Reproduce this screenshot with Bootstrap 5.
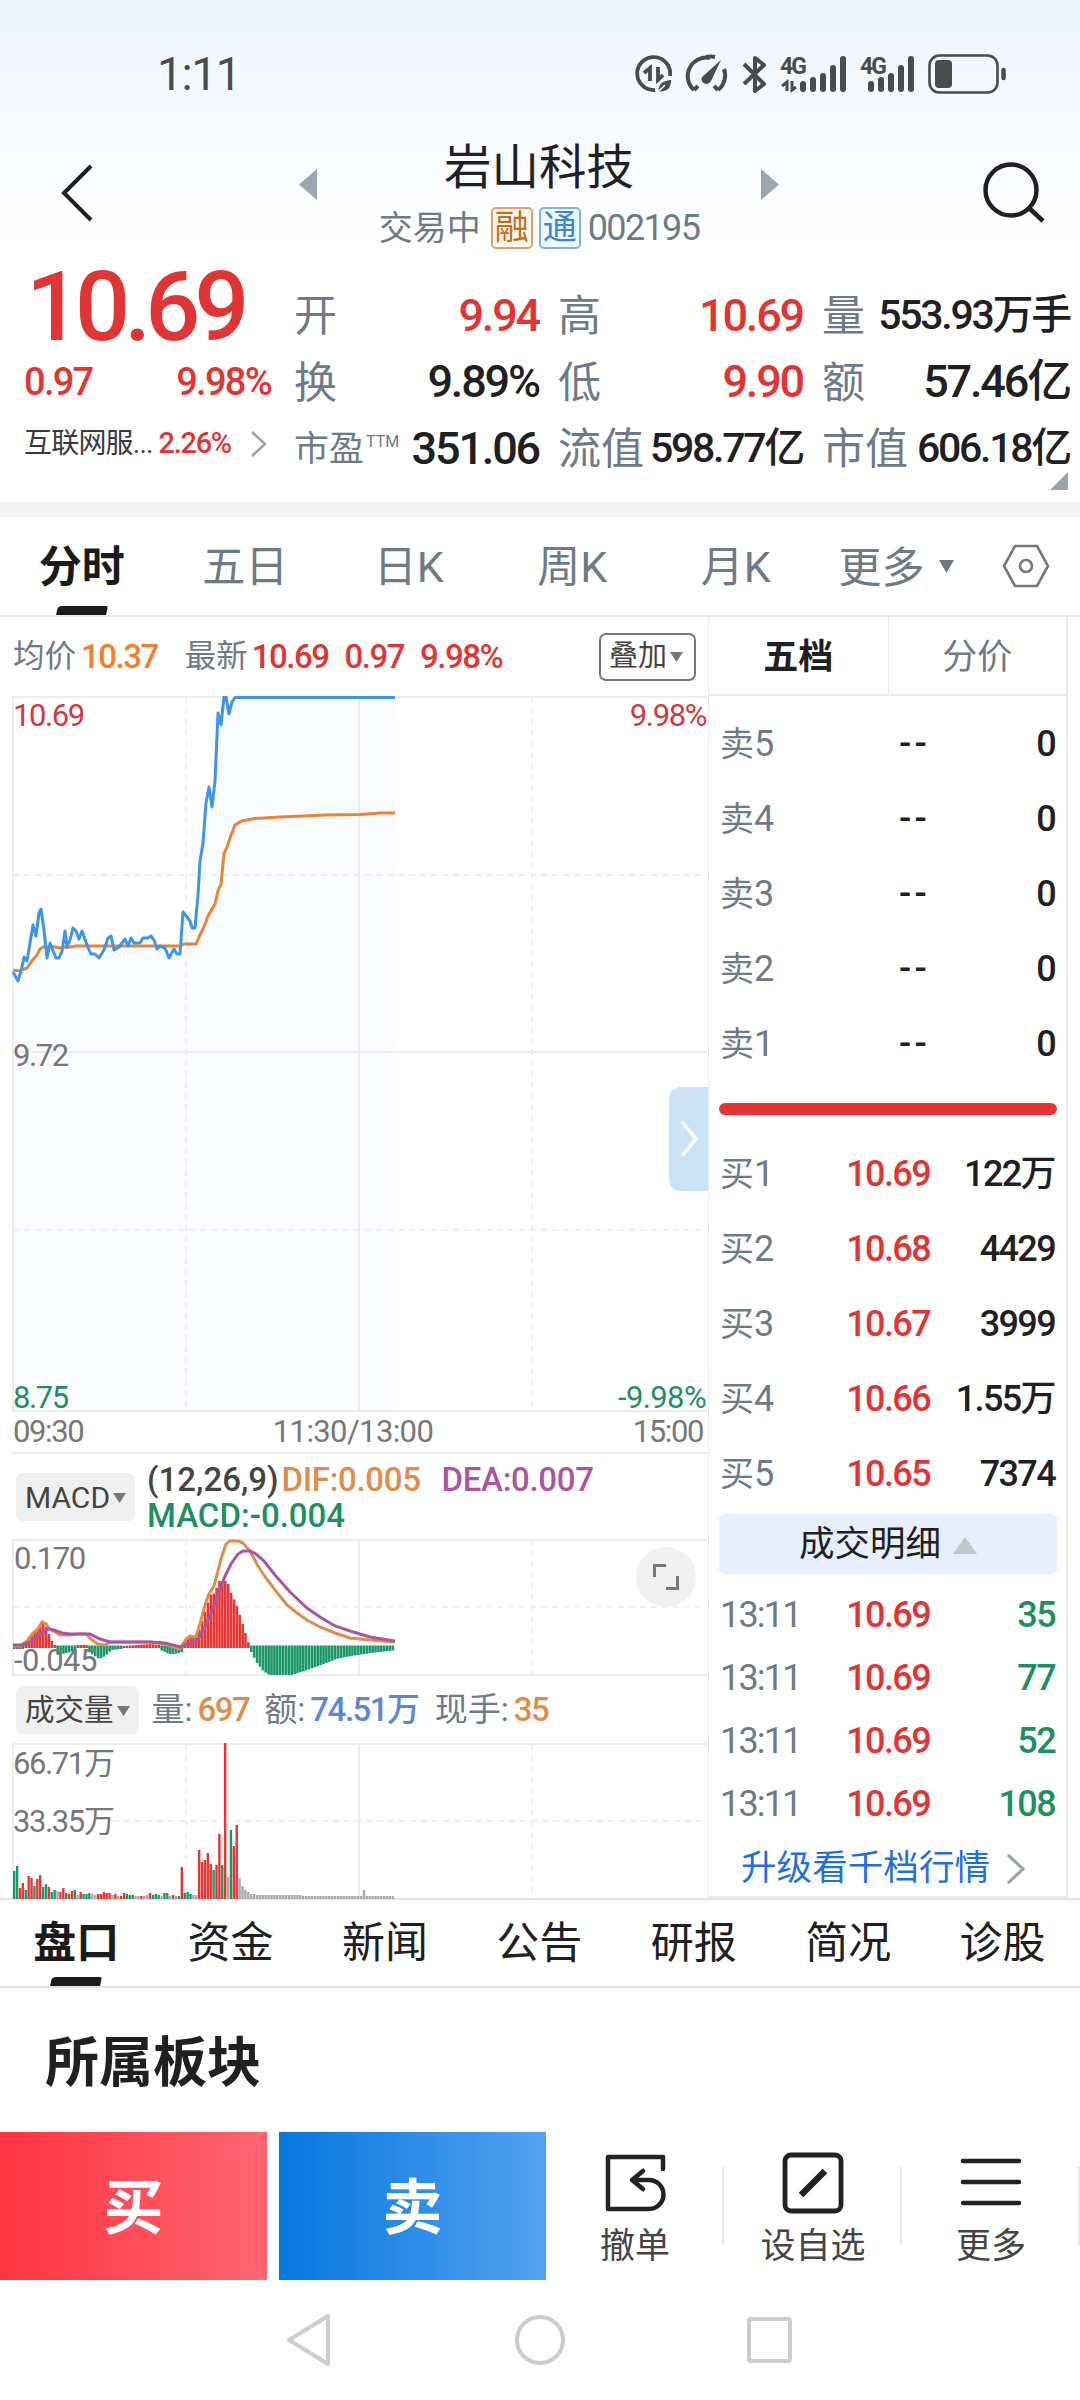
<!DOCTYPE html>
<html lang="zh-CN">
<head>
<meta charset="utf-8">
<meta name="viewport" content="width=device-width, initial-scale=1">
<title>岩山科技 002195</title>
<link href="https://cdn.jsdelivr.net/npm/bootstrap@5.3.0/dist/css/bootstrap.min.css" rel="stylesheet">
<style>
  :root { --up:#e03535; --down:#1f8f60; --ink:#1f2022; --mute:#6e7a86; --rule:#ebebeb; }
  body { width:1080px; height:2400px; overflow:hidden; background:#fff; color:var(--ink);
         font-family:Roboto,"Noto Sans CJK SC",sans-serif; line-height:1; }
  svg { display:block; flex:none; }
  .up { color:var(--up); } .down { color:var(--down); } .mute { color:var(--mute); }
  .num { letter-spacing:-.045em; font-weight:500; white-space:nowrap; }
  .thin { font-weight:400; }
  .top-zone { height:260px; background:linear-gradient(#eff4fe,#f8fafe 52%,#fff 96%); }
  .status { height:140px; padding:7px 72px 0 157px; }
  .clock { font-size:46px; color:#4a4b4d; letter-spacing:-.03em; }
  .title-row { height:120px; padding:0 34px 0 60px; }
  .stock-name { font-size:47.5px; line-height:50px; padding-top:3px; }
  .sub { font-size:34px; gap:7px; margin-top:14px; height:42px; }
  .tagbox { width:42px; height:42px; border:2px solid; border-radius:5px; font-size:34px; line-height:37px; text-align:center; }
  .tag-r { color:#c26d1c; border-color:#dca36d; background:#fff7ee; margin-left:3px; }
  .tag-t { color:#3b86c8; border-color:#7fb4dd; background:#eff7fd; margin-left:-1px; }
  .side-arrow { margin:29px 0 0 2px; }
  .quote { height:242px; padding:0 9px 0 24px; }
  .q-left { width:271px; padding-right:24px; }
  .price { font-size:97px; height:94px; line-height:94px; letter-spacing:-.062em; margin-left:2px; }
  .delta { font-size:38px; height:56px; }
  .sector { font-size:28px; height:67px; color:#3a3a3a; }
  .q-grid { width:776px; padding-top:22px; display:grid; grid-template-columns:245px 245px 248px; column-gap:19px; grid-auto-rows:66.5px; }
  .q-grid > div { display:flex; justify-content:space-between; align-items:center; white-space:nowrap; }
  .q-grid .lab { font-size:43px; color:var(--mute); padding-top:3px; margin-left:-1px; }
  .q-grid .num { font-size:45px; margin-right:1px; letter-spacing:-.048em; }
  .q-grid .num.mid { font-size:41px; letter-spacing:-.055em; }
  .ttm { font-size:16px; top:-14px; position:relative; margin-left:2px; }
  .corner { position:absolute; right:12px; bottom:12px; }
  .strip { height:15px; background:#f4f4f4; }
  .period { height:100px; border-bottom:2px solid var(--rule); font-size:43px; color:var(--mute); }
  .period .item { width:163.5px; padding-top:3px; }
  .item { text-align:center; position:relative; height:100%; display:flex; align-items:center; justify-content:center; }
  .on { font-weight:700; color:#1b1b1b; }
  .on::after { content:""; position:absolute; bottom:0; left:50%; width:50px; height:9px; margin-left:-25px; background:#1b1b1b; transform:skewX(-12deg); border-radius:4px 2px 0 0; }
  .main-zone { height:1281px; padding-left:12px; }
  .left-pane { width:696px; }
  .info { height:79px; font-size:31.5px; padding-left:1px; }
  .info .num { font-size:33px; }
  .overlay-btn { width:97px; height:48px; border:2px solid #777; border-radius:7px; font-size:29px; color:#444; background:#fff; margin-right:12px; padding:0 0 0 8px; gap:3px; }
  .soft-btn { background:#f0f0f0; border:0; border-radius:7px; height:48px; color:#444; font-size:30px; gap:3px; margin-left:4px; padding:2px 9px 0 9px; }
  .macd-head { height:87px; }
  .macd-text { font-size:33px; line-height:36px; font-weight:500; margin-left:12px; padding-top:2px; white-space:nowrap; }
  .vol-head { height:67px; font-size:33px; }
  .chart { position:relative; }
  .chart text { font-family:Roboto,"Noto Sans CJK SC",sans-serif; font-size:31px; letter-spacing:-.045em; fill:#777; }
  .handle { position:absolute; right:0; top:391px; width:39px; height:104px; background:#cce2f7; border-radius:12px 0 0 12px; }
  .expand { position:absolute; left:624px; top:8px; width:60px; height:60px; border-radius:50%; background:#f1f1f1; }
  .right-pane { width:360px; border:solid var(--rule); border-width:0 2px 2px 1px; }
  .book-tabs { height:79px; border-bottom:2px solid var(--rule); font-size:35px; padding-top:0; }
  .book-tabs > div { padding-top:4px; }
  .book-tabs > div + div { border-left:1px solid var(--rule); }
  .book-row { display:grid; grid-template-columns:80px 1fr 125px; align-items:center; padding:2px 11px 0 11px; height:75px; font-size:36px; }
  .book-row > :nth-child(n+2) { text-align:right; }
  .book-row .lab { color:var(--mute); white-space:nowrap; letter-spacing:-.035em; }
  .book-row .cn { font-size:34px; letter-spacing:0; }
  .book-row .num.dash { letter-spacing:.09em; padding-right:0; }
  .balance { height:12px; border-radius:6px; background:#e33434; margin:23px 9px 20px 10px; }
  .detail { height:60px; margin:4px 9px 8px 10px; border-radius:6px; background:#e6effb; font-size:35.5px; gap:12px; padding-top:2px; }
  .trade { height:63px; grid-template-columns:90px 1fr 125px; }
  .trade .lab { letter-spacing:-.05em; }
  .more-link { height:66px; font-size:35.6px; color:#1f6fdc; gap:16px; padding:4px 0 0 32px; }
  .info-tabs { height:90px; border:solid #e4e4e4; border-width:2px 0; font-size:43px; }
  .info-tabs .item { width:154.4px; }
  .block-title { height:144px; font-size:54px; font-weight:700; padding:8px 0 0 45px; margin:0; line-height:1; }
  .actions { height:148px; }
  .trade-btn { width:267px; height:148px; border-radius:0; border:0; color:#fff; font-size:60px; font-weight:700; padding:5px 0 0; }
  .buy { background:linear-gradient(90deg,#ff3442,#ff6671); }
  .sell { background:linear-gradient(90deg,#0676df,#53a2f0); margin-left:12px; }
  .act { width:178px; font-size:35px; color:#444; gap:15px; padding-top:3px; position:relative; }
  .act::after { content:""; position:absolute; right:0; top:35px; width:2px; height:78px; background:#e8e8e8; }
  .sysnav { height:120px; padding:0 288px 0 286px; }
</style>
<script src="https://cdn.jsdelivr.net/npm/bootstrap@5.3.0/dist/js/bootstrap.bundle.min.js"></script>
</head>
<body>
<header class="top-zone">
  <div class="status d-flex justify-content-between align-items-center">
    <div class="num thin clock">1:11</div>
    <svg width="376" height="50" viewBox="632 48 376 50" fill="none" stroke="#4a4b4d" stroke-width="4">
      <path d="M655 89a16.500 16.500 0 1 1 15-14M650 80V67l-6 5M658 66v13l5-5" stroke-width="3.800"/>
      <path d="M658 91c-1-10 6-12 14-13c0 9-4 14-14 13zM657 92l8-8" fill="#4a4b4d" stroke="#f4f7fe" stroke-width="1.500"/>
      <path d="M694 89a18.500 18.500 0 0 1 16-32M724 68a18.500 18.500 0 0 1-6 21M715 56a18.500 18.500 0 0 0-9 0M694 89l4-4M718 89l-4-4"/>
      <path d="M721 59L702 76a4.600 4.600 0 1 0 9 4z" fill="#4a4b4d" stroke="none"/>
      <path d="M744 63l20 20-9 7V57l9 7-20 19" stroke-linejoin="round"/>
      <g fill="#4a4b4d" stroke="none" font-family="Roboto" font-weight="700" font-size="23" letter-spacing="-2"><text x="780" y="73">4G</text><text x="860" y="73">4G</text></g>
      <path d="M787 90V81l-5 4M792 80v9l4-3" stroke-width="3"/>
      <g stroke-width="6" stroke-linecap="round"><path d="M803 83v5M813 79v9M823 75v13M833 67v21M843 58v30M871 83v5M881 79v9M891 75v13M901 67v21M911 58v30"/></g>
      <rect x="929.500" y="54.500" width="68" height="37" rx="10" stroke-width="2.600"/>
      <rect x="935" y="59" width="17" height="28" rx="4" fill="#4a4b4d" stroke="none"/>
      <path d="M1003.500 69v8" stroke-width="4.500" stroke-linecap="round"/>
    </svg>
  </div>
  <div class="title-row d-flex justify-content-between align-items-start">
    <svg class="mt-4" width="34" height="58" viewBox="0 0 34 58" fill="none" stroke="#1f2022" stroke-width="4"><path d="M31 2L4 29l27 27"/></svg>
    <div class="d-flex align-items-start">
      <svg class="side-arrow" width="18" height="31" viewBox="0 0 18 31"><path d="M18 0v31L0 15.500z" fill="#9ba6b0"/></svg>
      <div class="text-center" style="width:444px">
        <div class="stock-name">岩山科技</div>
        <div class="sub mute d-flex justify-content-center align-items-center"><span>交易中</span><span class="tagbox tag-r">融</span><span class="tagbox tag-t">通</span><span class="num thin" style="font-size:36px">002195</span></div>
      </div>
      <svg class="side-arrow ms-0" width="18" height="31" viewBox="0 0 18 31"><path d="M0 0v31l18-15.500z" fill="#9ba6b0"/></svg>
    </div>
    <svg style="margin-top:21px" width="64" height="62" viewBox="982 161 64 62" fill="none" stroke="#1f2022" stroke-width="4.500"><circle cx="1011" cy="190" r="25.500"/><path d="M1029 208l14 13"/></svg>
  </div>
</header>

<section class="quote d-flex position-relative">
  <div class="q-left">
    <div class="num price up">10.69</div>
    <div class="num delta up d-flex justify-content-between align-items-center"><span>0.97</span><span>9.98%</span></div>
    <div class="sector d-flex align-items-center"><span style="letter-spacing:-.8px">互联网服...</span><span class="num up" style="font-size:29px;margin-left:6px">2.26%</span>
      <svg class="ms-auto me-1" width="17" height="26" viewBox="0 0 17 26" fill="none" stroke="#999fa6" stroke-width="2.500"><path d="M2 1l13 12L2 25"/></svg></div>
  </div>
  <div class="q-grid">
    <div><span class="lab">开</span><span class="num up">9.94</span></div>
    <div><span class="lab">高</span><span class="num up">10.69</span></div>
    <div><span class="lab">量</span><span class="num mid">553.93万手</span></div>
    <div><span class="lab">换</span><span class="num">9.89%</span></div>
    <div><span class="lab">低</span><span class="num up">9.90</span></div>
    <div><span class="lab">额</span><span class="num">57.46亿</span></div>
    <div><span class="lab" style="font-size:35px">市盈<span class="ttm">TTM</span></span><span class="num">351.06</span></div>
    <div><span class="lab">流值</span><span class="num mid">598.77亿</span></div>
    <div><span class="lab">市值</span><span class="num mid">606.18亿</span></div>
  </div>
  <svg class="corner" width="18" height="18" viewBox="0 0 18 18"><path d="M18 0v18H0z" fill="#9aa2ad"/></svg>
</section>
<div class="strip"></div>

<nav class="period d-flex align-items-center">
  <div class="item on">分时</div><div class="item">五日</div><div class="item">日K</div><div class="item">周K</div><div class="item">月K</div>
  <div class="d-flex align-items-center" style="margin-left:21px;gap:14px"><span class="pt-1">更多</span><svg width="15" height="13" viewBox="0 0 15 13"><path d="M0 0h15L7.500 13z" fill="#6e7a86"/></svg></div>
  <svg class="ms-auto" style="margin-right:30px" width="48" height="44" viewBox="0 0 48 44" fill="none" stroke="#777" stroke-width="2.600"><path d="M13 2h22l11 20-11 20H13L2 22z"/><circle cx="24" cy="22" r="6"/></svg>
</nav>

<main class="main-zone d-flex">
  <div class="left-pane">
    <div class="info d-flex align-items-center">
      <span class="mute">均价</span><span class="num" style="color:#f0812b;margin-left:5px">10.37</span>
      <span class="mute" style="margin-left:27px">最新</span><span class="num up ms-1">10.69</span><span class="num up" style="margin-left:16px">0.97</span><span class="num up" style="margin-left:16px">9.98%</span>
      <button class="overlay-btn d-flex align-items-center ms-auto" type="button">叠加<svg width="13" height="10" viewBox="0 0 13 10"><path d="M0 0h13L6.500 10z" fill="#777"/></svg></button>
    </div>
    <div class="chart">
      <svg width="696" height="756" viewBox="12 696 696 756" fill="none">
        <path d="M13 972L18 981L22 967L24 957L27 961L33 925L36 936L39 913L41 909L44 930L47 958L50 943L56 958L59 958L65 931L67 947L73 928L79 939L82 931L91 954L95 954L99 958L111 936L114 950L125 939L128 946L131 938L134 943L151 936L157 949L165 948L169 958L180 954L183 912L192 928L195 928L200 861L206 803L212 807L218 713L224 697H395V1411H13z" fill="#f9fbff"/>
        <g stroke="#ededed" stroke-width="2"><path d="M13 1411V697H707M13 1052H707M359 697V1411M13 1411H707"/><path d="M186 697V1411M532 697V1411M13 875H707M13 1230H707" stroke-dasharray="6 5" stroke-width="1.500"/></g>
        <polyline points="13,970 20,971 27,968 32,961 37,955 40,949 43,947 55,947 60,948 70,947 76,946 180,946 184,944 196,944 200,935 204,927 208,916 215,904 218,891 221,884 224,854 227,847 230,838 233,830 235,825 242,821 255,818.500 280,817 305,816 325,815 360,814.500 380,813 395,813" stroke="#e8833a" stroke-width="3"/>
        <polyline points="13,972 18,981 22,967 24,957 27,961 30,943 33,925 36,936 39,913 41,909 44,930 47,958 50,943 56,958 59,958 62,951 65,931 67,947 70,940 73,928 76,931 79,939 82,931 87,945 91,954 95,954 99,958 104,950 108,938 111,936 114,950 119,947 125,939 128,946 131,938 134,943 140,943 143,938 148,938 151,936 154,940 157,949 160,946 165,948 169,958 174,949 177,954 180,954 183,912 187,917 190,921 192,928 195,928 198,895 200,861 203,843 206,803 209,787 212,807 215,781 218,713 221,725 224,697 226,697 229,714 232,702 235,697.500 395,697.500" stroke="#3e95e6" stroke-width="3" stroke-linejoin="round"/>
        <text x="13" y="726" style="fill:#cf3a42">10.69</text><text x="706" y="726" text-anchor="end" style="fill:#cf3a42">9.98%</text>
        <text x="13" y="1066">9.72</text>
        <text x="13" y="1408" style="fill:#1f8f60">8.75</text><text x="706" y="1408" text-anchor="end" style="fill:#1f8f60;letter-spacing:-.02em">-9.98%</text>
        <text x="13" y="1442">09:30</text><text x="353" y="1442" text-anchor="middle" style="letter-spacing:-.02em">11:30/13:00</text><text x="703" y="1442" text-anchor="end">15:00</text>
      </svg>
      <div class="handle d-flex align-items-center justify-content-center"><svg width="20" height="40" viewBox="0 0 20 40" fill="none" stroke="#fff" stroke-width="3.500"><path d="M3 3l14 17L3 37"/></svg></div>
    </div>
    <div class="macd-head d-flex align-items-center" style="border-top:2px solid #ededed">
      <button class="soft-btn d-flex align-items-center" type="button"><span>MACD</span><svg width="13" height="10" viewBox="0 0 13 10"><path d="M0 0h13L6.500 10z" fill="#777"/></svg></button>
      <div class="macd-text"><span style="color:#444">(12,26,9)</span><span style="color:#dd8d4d;margin-left:3px;letter-spacing:-.01em">DIF:0.005</span><span style="color:#ab559f;margin-left:21px;letter-spacing:-.01em">DEA:0.007</span><br><span class="down">MACD:-0.004</span></div>
    </div>
    <div class="chart">
      <svg width="696" height="137" viewBox="12 1540 696 137" fill="none">
        <g stroke="#ededed" stroke-width="2"><path d="M13 1677V1541H707M359 1540V1676M13 1676H707"/><path d="M186 1540V1676M532 1540V1676M13 1608H707" stroke-dasharray="6 5" stroke-width="1.500"/></g>
        <g id="macdBars"></g>
        <text x="14" y="1570">0.170</text><text x="14" y="1672" style="letter-spacing:-.02em">-0.045</text>
        <polyline points="13,1647 20,1647 27,1642 33,1634 38,1630 42,1623 46,1625 50,1630 60,1636 70,1636 78,1635 86,1635 92,1641 98,1645 105,1646 110,1643 150,1643 165,1645 180,1650 186,1640 190,1637 196,1638 200,1625 205,1606 209,1595 214,1587 218,1572 221,1560 226,1545 230,1542 238,1542 243,1544 250,1552 258,1567 266,1579 275,1591 287,1606 297,1614 307,1621 320,1628 335,1634 350,1639 370,1641 395,1643" stroke="#dd8d4d" stroke-width="3"/>
        <polyline points="13,1646 22,1646 33,1642 40,1635 48,1630 54,1631 62,1634 70,1635 90,1635 100,1640 110,1643 150,1643 165,1644 180,1648 190,1644 198,1640 204,1630 212,1612 220,1590 225,1577 231,1565 238,1555 243,1552 250,1552 256,1555 264,1562 275,1576 290,1593 307,1609 320,1618 335,1627 350,1632 370,1638 395,1642" stroke="#ab559f" stroke-width="3"/>
      </svg>
      <div class="expand d-flex align-items-center justify-content-center"><svg width="28" height="28" viewBox="0 0 28 28" fill="none" stroke="#777" stroke-width="3"><path d="M2.500 14V2.500H14M14 25.500h11.500V13"/></svg></div>
    </div>
    <div class="vol-head d-flex align-items-center">
      <button class="soft-btn d-flex align-items-center" type="button" style="font-size:29.500px">成交量<svg width="13" height="10" viewBox="0 0 13 10"><path d="M0 0h13L6.500 10z" fill="#777"/></svg></button>
      <span class="mute" style="margin-left:13px">量:</span><span class="num" style="color:#dd8d4d;margin-left:5px">697</span>
      <span class="mute" style="margin-left:15px">额:</span><span class="num" style="color:#5d87d6;margin-left:5px">74.51万</span>
      <span class="mute" style="margin-left:16px">现手:</span><span class="num" style="color:#dd8d4d;margin-left:5px">35</span>
    </div>
    <div class="chart">
      <svg width="696" height="156" viewBox="12 1743 696 156" fill="none">
        <g stroke="#ededed" stroke-width="2"><path d="M13 1899V1744H707M359 1744V1899"/><path d="M186 1744V1899M532 1744V1899M113 1821H707" stroke-dasharray="6 5" stroke-width="1.500"/></g>
        <g id="volBars"></g>
        <text x="13" y="1774">66.71万</text><text x="13" y="1832">33.35万</text>
      </svg>
    </div>
  </div>

  <aside class="right-pane">
    <div class="book-tabs d-flex text-center"><div class="w-50 fw-bold d-flex align-items-center justify-content-center">五档</div><div class="w-50 mute d-flex align-items-center justify-content-center">分价</div></div>
    <div style="padding-top:9px">
      <div class="book-row"><span class="lab"><span class="cn">卖</span>5</span><span class="num dash">--</span><span class="num">0</span></div>
      <div class="book-row"><span class="lab"><span class="cn">卖</span>4</span><span class="num dash">--</span><span class="num">0</span></div>
      <div class="book-row"><span class="lab"><span class="cn">卖</span>3</span><span class="num dash">--</span><span class="num">0</span></div>
      <div class="book-row"><span class="lab"><span class="cn">卖</span>2</span><span class="num dash">--</span><span class="num">0</span></div>
      <div class="book-row"><span class="lab"><span class="cn">卖</span>1</span><span class="num dash">--</span><span class="num">0</span></div>
    </div>
    <div class="balance"></div>
    <div class="book-row"><span class="lab"><span class="cn">买</span>1</span><span class="num up">10.69</span><span class="num">122万</span></div>
    <div class="book-row"><span class="lab"><span class="cn">买</span>2</span><span class="num up">10.68</span><span class="num">4429</span></div>
    <div class="book-row"><span class="lab"><span class="cn">买</span>3</span><span class="num up">10.67</span><span class="num">3999</span></div>
    <div class="book-row"><span class="lab"><span class="cn">买</span>4</span><span class="num up">10.66</span><span class="num">1.55万</span></div>
    <div class="book-row"><span class="lab"><span class="cn">买</span>5</span><span class="num up">10.65</span><span class="num">7374</span></div>
    <div class="detail d-flex align-items-center justify-content-center">成交明细<svg width="24" height="17" viewBox="0 0 24 17"><path d="M12 0l12 17H0z" fill="#c4c7ca"/></svg></div>
    <div class="book-row trade"><span class="lab">13:11</span><span class="num up">10.69</span><span class="num down">35</span></div>
    <div class="book-row trade"><span class="lab">13:11</span><span class="num up">10.69</span><span class="num down">77</span></div>
    <div class="book-row trade"><span class="lab">13:11</span><span class="num up">10.69</span><span class="num down">52</span></div>
    <div class="book-row trade"><span class="lab">13:11</span><span class="num up">10.69</span><span class="num down">108</span></div>
    <div class="more-link d-flex align-items-center">升级看千档行情<svg width="19" height="30" viewBox="0 0 19 30" fill="none" stroke="#999fa6" stroke-width="3"><path d="M2 1l15 14L2 29"/></svg></div>
  </aside>
</main>

<nav class="info-tabs d-flex">
  <div class="item on" style="margin-left:-1px">盘口</div><div class="item">资金</div><div class="item">新闻</div><div class="item">公告</div><div class="item">研报</div><div class="item">简况</div><div class="item">诊股</div>
</nav>
<h2 class="block-title d-flex align-items-center">所属板块</h2>

<footer>
  <div class="actions d-flex">
    <button class="trade-btn buy" type="button">买</button><button class="trade-btn sell" type="button">卖</button>
    <div class="act d-flex flex-column align-items-center justify-content-center"><svg width="62" height="62" viewBox="0 0 62 62" fill="none" stroke="#222" stroke-width="4.500" stroke-linecap="round" stroke-linejoin="round"><path d="M59 17V5H4v52h41a14.500 14.500 0 0 0 0-29H29M39 19l-11 9 11 9"/></svg><span>撤单</span></div>
    <div class="act d-flex flex-column align-items-center justify-content-center"><svg width="62" height="62" viewBox="0 0 62 62" fill="none" stroke="#222"><rect x="3" y="3" width="56" height="56" rx="6" stroke-width="4.800"/><path d="M43 19L19 43" stroke-width="6.500"/></svg><span>设自选</span></div>
    <div class="act d-flex flex-column align-items-center justify-content-center"><svg width="62" height="62" viewBox="0 0 62 62" fill="none" stroke="#222" stroke-width="4.500" stroke-linecap="round"><path d="M3 9h56M3 30h56M3 51h56"/></svg><span>更多</span></div>
  </div>
  <div class="sysnav d-flex justify-content-between align-items-center">
    <svg width="46" height="54" viewBox="0 0 46 54" fill="none" stroke="#cdcdcd" stroke-width="4" stroke-linejoin="round"><path d="M42 3v48L3 27z"/></svg>
    <svg width="52" height="52" viewBox="0 0 52 52" fill="none" stroke="#cdcdcd" stroke-width="4"><circle cx="26" cy="26" r="23"/></svg>
    <svg width="45" height="48" viewBox="0 0 45 48" fill="none" stroke="#cdcdcd" stroke-width="4"><rect x="2" y="3" width="41" height="42" rx="2"/></svg>
  </div>
</footer>

<script>
  const RED = '#e93434', GREEN = '#1c9868', GREY = '#aaa', STEP = 2.89;
  const NS = 'http://www.w3.org/2000/svg';
  function bar(group, x, y, h, w, fill) {
    const r = document.createElementNS(NS, 'rect');
    Object.entries({ x, y, width: w, height: h, fill }).forEach(([k, v]) => r.setAttribute(k, v));
    group.appendChild(r);
  }
  // MACD histogram: envelope points, each run on one side of the zero line
  const runs = [
    [[13,1650],[21,1650]],
    [[22,1647],[27,1642],[33,1632],[38,1628],[42,1624],[45,1628],[50,1641],[53,1646]],
    [[54,1651],[57,1657],[61,1655],[70,1653],[74,1650]],
    [[75,1646],[84,1646]],
    [[85,1651],[92,1656],[98,1660],[104,1657],[110,1651],[120,1650]],
    [[122,1647],[150,1645],[156,1646]],
    [[157,1650],[168,1655],[174,1655],[181,1653]],
    [[183,1643],[190,1636],[195,1638],[200,1625],[209,1596],[214,1594],[217,1582],[226,1582],[229,1592],[236,1608],[241,1624],[248,1646]],
    [[249,1651],[255,1663],[262,1672],[268,1676],[290,1676],[300,1673],[320,1666],[335,1660],[350,1657],[370,1654],[396,1651]]
  ];
  const macd = document.getElementById('macdBars');
  for (let x = 13; x < 394; x += STEP) {
    const run = runs.find(r => x <= r[r.length - 1][0] + 1.5);
    let i = 0;
    while (i < run.length - 2 && x > run[i + 1][0]) i++;
    const [x0, y0] = run[i], [x1, y1] = run[i + 1];
    const t = Math.max(0, Math.min(1, (x - x0) / (x1 - x0)));
    const y = y0 + (y1 - y0) * t;
    if (y < 1648) bar(macd, x, y, 1649 - y, 2.6, RED); else bar(macd, x, 1646.5, y - 1646.5, 2.6, GREEN);
  }
  // Volume per minute: colour letter and height in pixels
  const vol = ('g28 g33 r11 r16 g9 r23 r21 g13 r20 r24 g12 g15 r12 g7 g9 a8 r7 r11 g6 r5 r8 g9 a4 r7 g5 g5 g6 a5 a4 r5 r5 r7 r6 r6 a4 r5 a3 r3 r6 g5 g4 g4 a3 a3 ' +
    'r3 a3 a4 r6 g4 g5 g4 a3 g6 g6 a3 r4 a3 g3 r32 g6 g7 g5 a4 a4 r49 r37 r39 r46 r35 g29 r34 r65 g34 r156 a22 g69 r53 r74 a21 a13 a9 a7 a5 a5').split(' ');
  while (vol.length < 132) vol.push(vol.length === 121 ? 'a9' : vol.length < 100 ? 'a4' : 'a3');
  const vg = document.getElementById('volBars');
  vol.forEach((v, i) => {
    const h = +v.slice(1);
    bar(vg, 13 + i * STEP, 1899 - h, h, 2.4, { r: RED, g: GREEN, a: GREY }[v[0]]);
  });
</script>
</body>
</html>
